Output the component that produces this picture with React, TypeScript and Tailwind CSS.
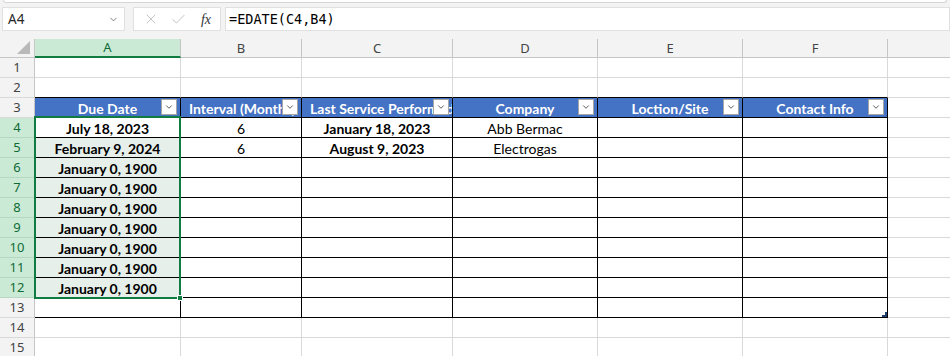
import React from 'react';
import { ChevronDown, X, Check } from 'lucide-react';

type Row = { n: number; cells: string[] };

const header = ['Due Date', 'Interval (Months)', 'Last Service Performed', 'Company', 'Loction/Site', 'Contact Info'];
// header cells whose text is wider than the cell and gets clipped by the filter button
const clipped = [false, true, true, false, false, false];
const boldCols = [true, false, true, false, false, false];

const rows: Row[] = [
  { n: 1, cells: [] },
  { n: 2, cells: [] },
  { n: 3, cells: header },
  { n: 4, cells: ['July 18, 2023', '6', 'January 18, 2023', 'Abb Bermac', '', ''] },
  { n: 5, cells: ['February 9, 2024', '6', 'August 9, 2023', 'Electrogas', '', ''] },
  { n: 6, cells: ['January 0, 1900'] },
  { n: 7, cells: ['January 0, 1900'] },
  { n: 8, cells: ['January 0, 1900'] },
  { n: 9, cells: ['January 0, 1900'] },
  { n: 10, cells: ['January 0, 1900'] },
  { n: 11, cells: ['January 0, 1900'] },
  { n: 12, cells: ['January 0, 1900'] },
  { n: 13, cells: [] },
  { n: 14, cells: [] },
  { n: 15, cells: [] },
];

const letters = ['A', 'B', 'C', 'D', 'E', 'F', 'G'];

const FilterButton = () => (
  <div className="absolute right-[3px] top-[1px] flex h-[16px] w-[16px] items-center justify-center border border-[#a6a6a6] bg-white">
    <ChevronDown size={10} strokeWidth={2} color="#404040" />
  </div>
);

const cellBorder = (row: number, col: number) => {
  const inTable = row >= 3 && row <= 13 && col <= 5;
  if (inTable) return 'border-r border-b border-r-black border-b-black';
  if (row === 2 && col <= 5) return 'border-r border-b border-r-[#d9d9d9] border-b-black';
  return 'border-r border-b border-[#d9d9d9]';
};

const cellFill = (row: number, col: number) => {
  if (row === 3 && col <= 5) return 'bg-[#4472c4]';
  if (col === 0 && row >= 5 && row <= 12) return 'bg-[#e6efe9]';
  return 'bg-white';
};

export default function App() {
  return (
    <div className="h-[356px] w-[950px] overflow-hidden bg-[#f3f3f3] font-['Noto_Sans',sans-serif]">
      {/* ribbon bottom edge */}
      <div className="mx-[3px] h-[3px] rounded-b-[4px] border-x border-b border-[#d6d6d6] bg-white" />

      {/* formula bar */}
      <div className="mt-[4px] flex h-[24px]">
        <div className="ml-[2px] flex w-[123px] items-center justify-between border border-[#e0e0e0] bg-white pl-[5px] pr-[5px]">
          <span className="pt-[1px] text-[13.5px] text-[#262626]">A4</span>
          <ChevronDown size={11} strokeWidth={1.6} color="#555" />
        </div>
        <div className="ml-[8px] flex w-[88px] items-center border border-[#e0e0e0] bg-white">
          <div className="flex w-[30px] justify-center pl-[4px]">
            <X size={16} strokeWidth={1} color="#a8a8a8" />
          </div>
          <div className="flex w-[28px] justify-center">
            <Check size={17} strokeWidth={1} color="#a8a8a8" />
          </div>
          <div className="flex w-[28px] justify-center font-['Liberation_Serif',serif] text-[14px] italic text-[#333]">fx</div>
        </div>
        <div className="ml-[4px] flex flex-1 items-center border border-[#e0e0e0] bg-white pl-[3px] font-['DejaVu_Sans_Mono',monospace] text-[13.5px] text-black">
          =EDATE(C4,B4)
        </div>
      </div>

      {/* sheet */}
      <div className="relative mt-[8px] w-[950px] overflow-hidden">
        <div className="grid grid-cols-[35px_146px_121px_151px_145px_145px_145px_146px]">
          {/* column headers */}
          <div className="relative h-[19px] border-r border-b border-[#c6c6c6] bg-[#f3f3f3]">
            <svg className="absolute bottom-[3px] right-[4px]" width="13" height="13" viewBox="0 0 13 13">
              <polygon points="13,0 13,13 0,13" fill="#b9b9b9" />
            </svg>
          </div>
          {letters.map((l, i) =>
            i === 0 ? (
              <div
                key={l}
                className="flex h-[19px] items-center justify-center border-r border-b-2 border-r-[#c6c6c6] border-b-[#107c41] bg-[#caead5] pt-[1px] text-[13px] text-[#0f6b36]"
              >
                {l}
              </div>
            ) : (
              <div
                key={l}
                className="flex h-[19px] items-center justify-center border-r border-b border-[#c6c6c6] bg-[#f3f3f3] pt-[1px] text-[13px] text-[#444]"
              >
                {i === 6 ? '' : l}
              </div>
            )
          )}

          {rows.map((r) => (
            <React.Fragment key={r.n}>
              {r.n >= 4 && r.n <= 12 ? (
                <div className="flex h-[20px] items-center justify-center border-r border-b border-r-[#c6c6c6] border-b-[#b5d8c2] bg-[#caead5] text-[13px] text-[#0f6b36]">
                  {r.n}
                </div>
              ) : (
                <div className="flex h-[20px] items-center justify-center border-r border-b border-r-[#c6c6c6] border-b-[#d9d9d9] bg-[#f3f3f3] text-[13px] text-[#444]">
                  {r.n}
                </div>
              )}
              {letters.map((_, c) => {
                const text = r.cells[c] ?? '';
                const isHeader = r.n === 3 && c <= 5;
                return (
                  <div
                    key={c}
                    className={`relative flex h-[20px] items-end overflow-hidden whitespace-nowrap font-['Lato',sans-serif] leading-[17px] ${cellBorder(r.n, c)} ${cellFill(r.n, c)}`}
                  >
                    {isHeader ? (
                      <>
                        {clipped[c] ? (
                          <span className="w-full pl-[8px] text-[14px] font-bold text-white">{text}</span>
                        ) : (
                          <span className="w-full text-center text-[14px] font-bold text-white">{text}</span>
                        )}
                        <FilterButton />
                      </>
                    ) : boldCols[c] ? (
                      <span className="w-full text-center text-[14px] font-bold text-black">{text}</span>
                    ) : (
                      <span className="w-full text-center text-[14px] text-black">{text}</span>
                    )}
                  </div>
                );
              })}
            </React.Fragment>
          ))}
        </div>

        {/* selection A4:A12 */}
        <div className="pointer-events-none absolute left-[34px] top-[77px] h-[183px] w-[147px] border-2 border-[#107c41]" />
        <div className="pointer-events-none absolute left-[177px] top-[256px] h-[6px] w-[6px] border border-white bg-[#107c41]" />

        {/* table resize handle */}
        <svg className="pointer-events-none absolute left-[882px] top-[273px]" width="5" height="5" viewBox="0 0 5 5">
          <polygon points="5,0 5,5 0,5 0,3 3,3 3,0" fill="#1f3f6b" />
        </svg>
      </div>
    </div>
  );
}
